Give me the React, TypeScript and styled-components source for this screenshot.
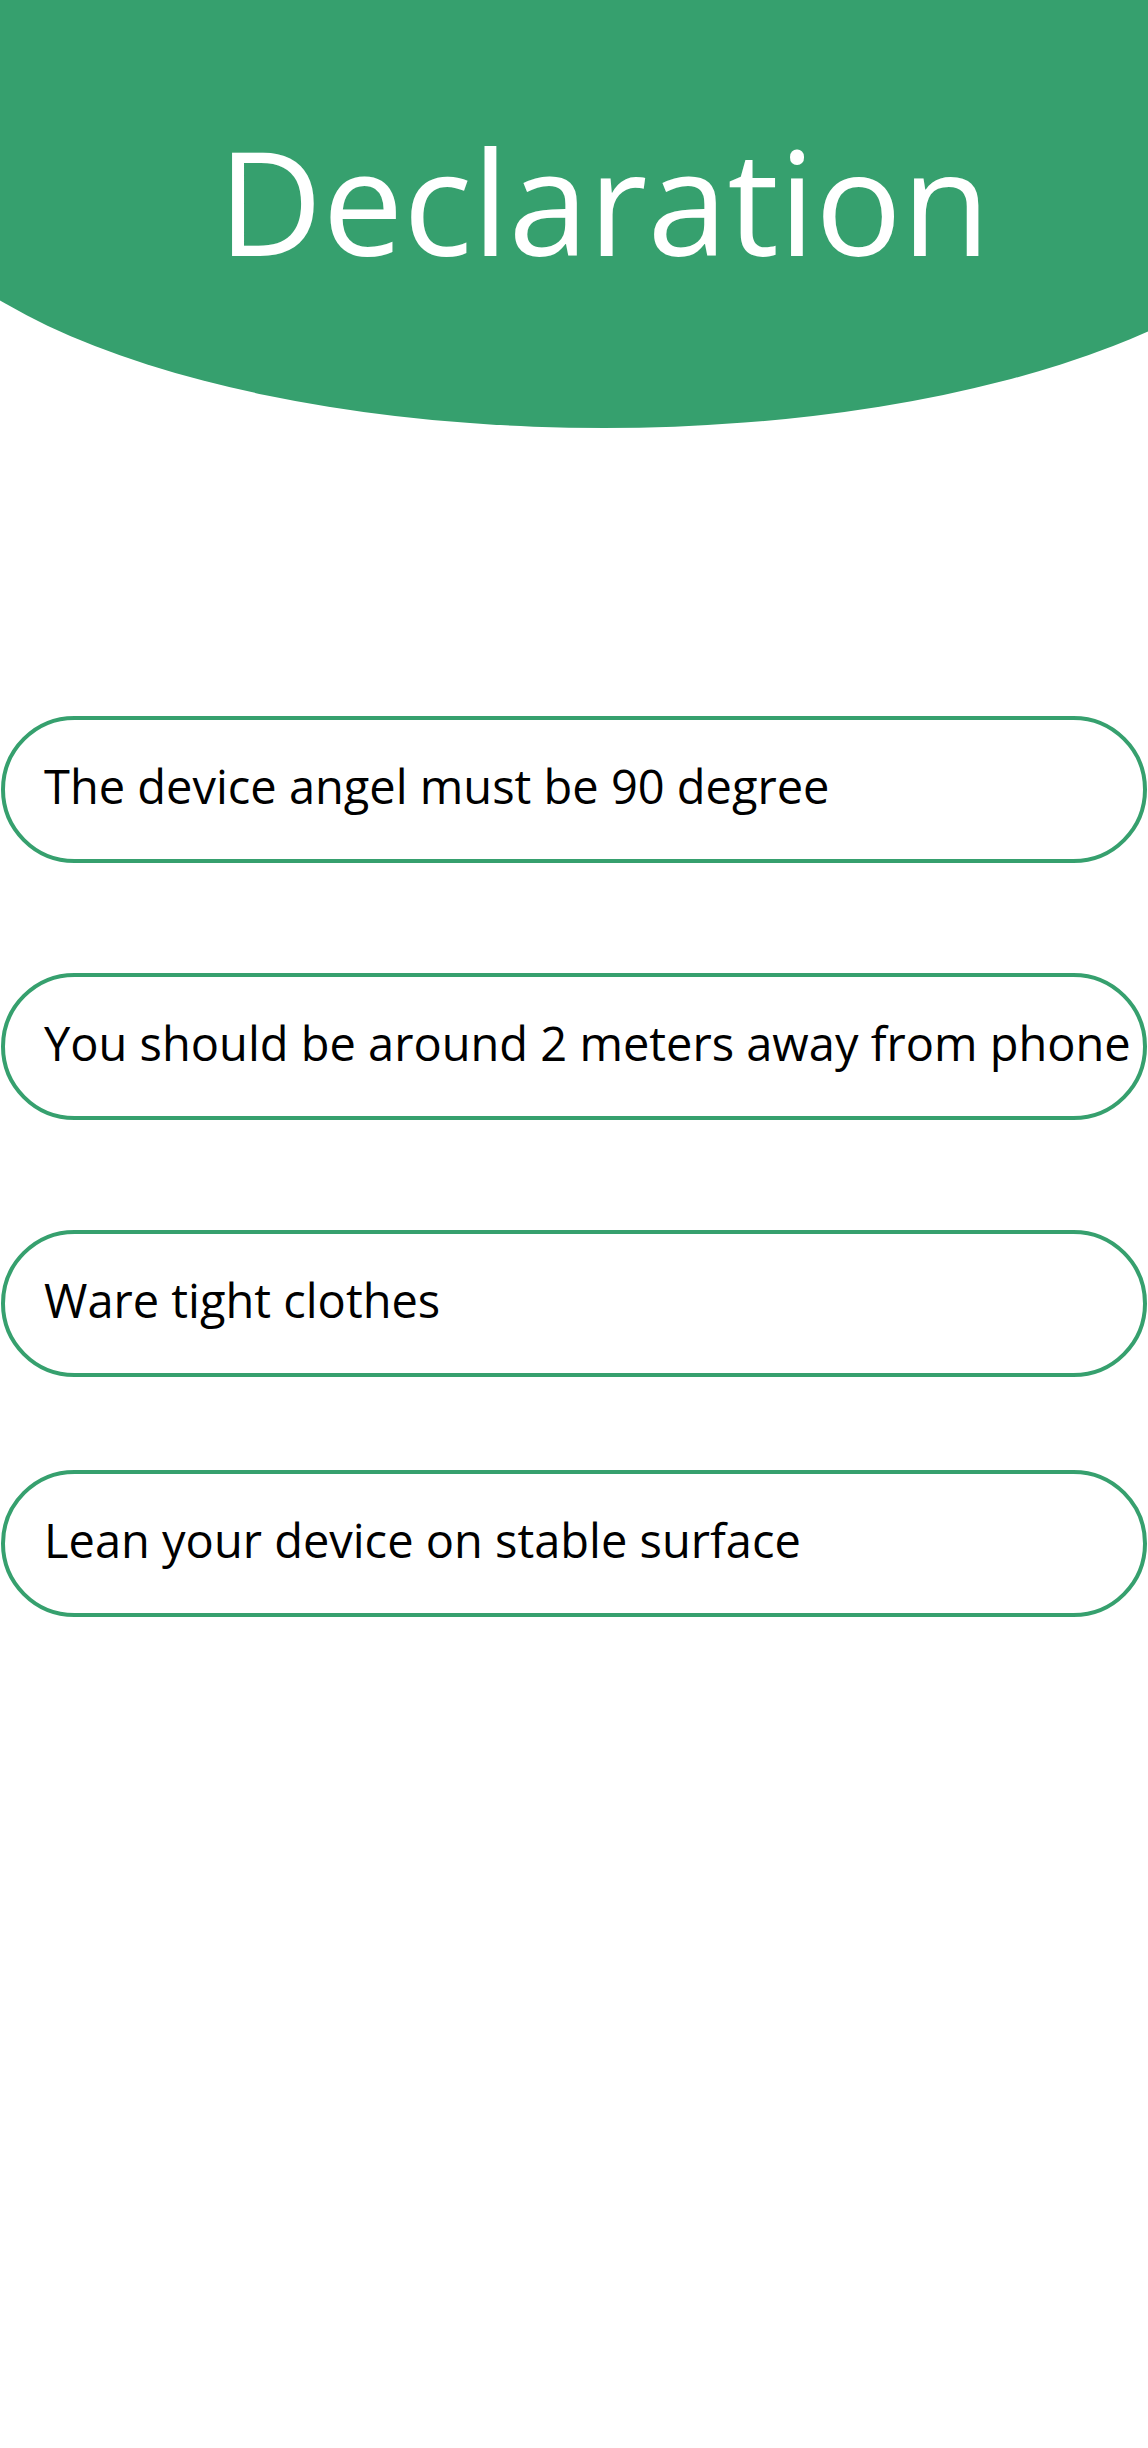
import React from "react";
import styled, { createGlobalStyle } from "styled-components";

const GREEN = "#36a06e";

const GlobalStyle = createGlobalStyle`
  html, body {
    margin: 0;
    padding: 0;
    background: #ffffff;
  }
  body {
    font-family: "Open Sans", "Liberation Sans", sans-serif;
  }
`;

const Page = styled.div`
  width: 1148px;
  min-height: 2448px;
  background: #ffffff;
  display: flex;
  flex-direction: column;
`;

const HeaderClip = styled.header`
  height: 428px;
  overflow: hidden;
`;

const HeaderShape = styled.div`
  width: 1440px;
  height: 428px;
  margin-left: -116px;
  background: ${GREEN};
  border-radius: 0 0 50% 50% / 0 0 280px 280px;
  display: flex;
  justify-content: center;
`;

const Title = styled.h1`
  margin: 0;
  padding-top: 128px;
  font-family: "Open Sans", "Liberation Sans", sans-serif;
  font-weight: 400;
  font-size: 144px;
  line-height: 144px;
  color: #ffffff;
`;

const List = styled.section`
  display: flex;
  flex-direction: column;
  padding: 288px 1px 0;
`;

const Rule = styled.div<{ $gap: number }>`
  height: 147px;
  box-sizing: border-box;
  margin-bottom: ${(p) => p.$gap}px;
  border: 4px solid ${GREEN};
  border-radius: 74px;
  display: flex;
  align-items: center;
  padding: 0 0 8px 39px;
  font-family: "Open Sans", "Liberation Sans", sans-serif;
  font-weight: 400;
  font-size: 47px;
  letter-spacing: 0;
  color: #000000;
  white-space: nowrap;
`;

const rules = [
  { text: "The device angel must be 90 degree", gap: 110 },
  { text: "You should be around 2 meters away from phone", gap: 110 },
  { text: "Ware tight clothes", gap: 93 },
  { text: "Lean your device on stable surface", gap: 0 },
];

export default function App() {
  return (
    <Page>
      <GlobalStyle />
      <HeaderClip>
        <HeaderShape>
          <Title>Declaration</Title>
        </HeaderShape>
      </HeaderClip>
      <List>
        {rules.map((r) => (
          <Rule key={r.text} $gap={r.gap}>
            {r.text}
          </Rule>
        ))}
      </List>
    </Page>
  );
}
